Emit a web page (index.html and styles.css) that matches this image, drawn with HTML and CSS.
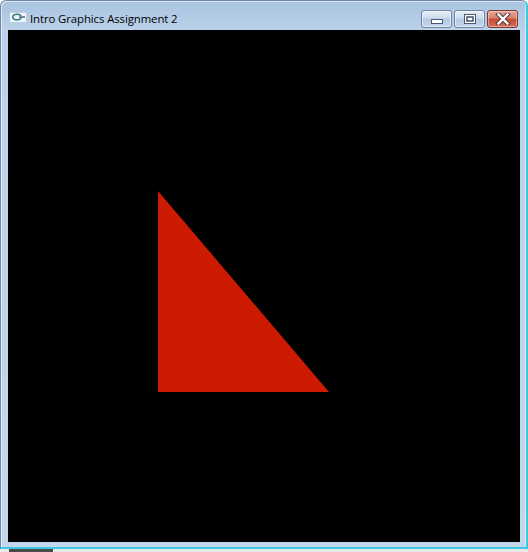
FILE: index.html
```html
<!DOCTYPE html>
<html>
<head>
<meta charset="utf-8">
<link rel="stylesheet" href="styles.css">
</head>
<body>
<div class="window">
  <div class="titlebar">
    <svg class="appicon" width="16" height="10" viewBox="0 0 16 10">
      <rect x="0" y="0" width="16" height="10" fill="#f2f6f8"/>
      <ellipse cx="7" cy="5" rx="4.2" ry="2.8" fill="none" stroke="#2f7a86" stroke-width="1.6"/>
      <rect x="9" y="4" width="6" height="2" fill="#6a8f99"/>
      <rect x="0" y="0" width="16" height="1" fill="#c8d6dc"/>
    </svg>
    <span class="title">Intro Graphics Assignment 2</span>
    <div class="controls">
      <div class="btn">
        <svg width="12" height="6" viewBox="0 0 12 6"><rect x="0.5" y="0.5" width="11" height="4" fill="#fff" stroke="#4a5a70"/></svg>
      </div>
      <div class="btn">
        <svg width="12" height="10" viewBox="0 0 12 10"><rect x="0.5" y="0.5" width="11" height="9" fill="#fff" stroke="#4a5a70"/><rect x="3" y="3" width="6" height="4" fill="none" stroke="#4a5a70" stroke-width="1.6"/></svg>
      </div>
      <div class="btn close">
        <svg width="16" height="12" viewBox="0 0 16 12"><path d="M3.5 1.5 L12.5 10.5 M12.5 1.5 L3.5 10.5" stroke="#5a3a3a" stroke-width="4.4" stroke-linecap="square"/><path d="M3.5 1.5 L12.5 10.5 M12.5 1.5 L3.5 10.5" stroke="#fff" stroke-width="2.4" stroke-linecap="square"/></svg>
      </div>
    </div>
  </div>
  <div class="canvas">
    <svg width="512" height="512" viewBox="0 0 512 512">
      <polygon points="150,161 150,362 321,362" fill="#cc1b00"/>
    </svg>
  </div>
</div>
<div class="strip">
  <div class="strip-dark"></div>
</div>
</body>
</html>
```
FILE: styles.css
```css
html, body {
  margin: 0;
  padding: 0;
  background: #ffffff;
  width: 528px;
  height: 552px;
  overflow: hidden;
}
.window {
  box-sizing: border-box;
  width: 528px;
  height: 549px;
  background: linear-gradient(to bottom, #a9c3e0 0px, #bcd2ea 30px, #c2d6ec 100%);
  border: 1px solid #6e8aa8;
  border-right: 2px solid #3cc8e0;
  border-bottom: 2px solid #3cc8e0;
  border-radius: 6px 6px 0 0;
  padding: 0 6px 0 7px;
  display: flex;
  flex-direction: column;
  box-shadow: inset 1px 1px 0 rgba(255,255,255,0.6), inset -1px 0 0 rgba(255,255,255,0.5);
}
.titlebar {
  height: 29px;
  display: flex;
  align-items: center;
  padding-left: 2px;
  position: relative;
}
.appicon {
  margin-top: 3px;
}
.title {
  font-family: "Open Sans", "DejaVu Sans", sans-serif;
  font-size: 11.4px;
  color: #000;
  margin-left: 4px;
  margin-top: 5px;
  letter-spacing: -0.1px;
}
.controls {
  margin-left: auto;
  display: flex;
  gap: 2px;
  align-self: flex-start;
  margin-top: 9px;
  margin-right: 2px;
}
.btn {
  box-sizing: border-box;
  width: 31px;
  height: 18px;
  border: 1px solid #6c84a2;
  border-radius: 3px;
  background: linear-gradient(to bottom, #e4edf7 0%, #cddcee 45%, #b4c9e2 50%, #c4d6ec 100%);
  display: flex;
  align-items: center;
  justify-content: center;
  box-shadow: inset 0 0 0 1px rgba(255,255,255,0.55);
}
.btn svg { display: block; }
.btn:first-child svg { margin-top: 5px; }
.btn.close {
  border-color: #7a3a30;
  background: linear-gradient(to bottom, #e8a696 0%, #d88270 45%, #c44a33 50%, #d4705a 100%);
  box-shadow: inset 0 0 0 1px rgba(255,220,210,0.5);
}
.canvas {
  width: 512px;
  height: 512px;
  background: #000;
}
.canvas svg { display: block; }
.strip {
  height: 3px;
  background: #e8e8e8;
  display: flex;
}
.strip-dark {
  margin-left: 9px;
  width: 44px;
  background: #4a4a4a;
}
```
